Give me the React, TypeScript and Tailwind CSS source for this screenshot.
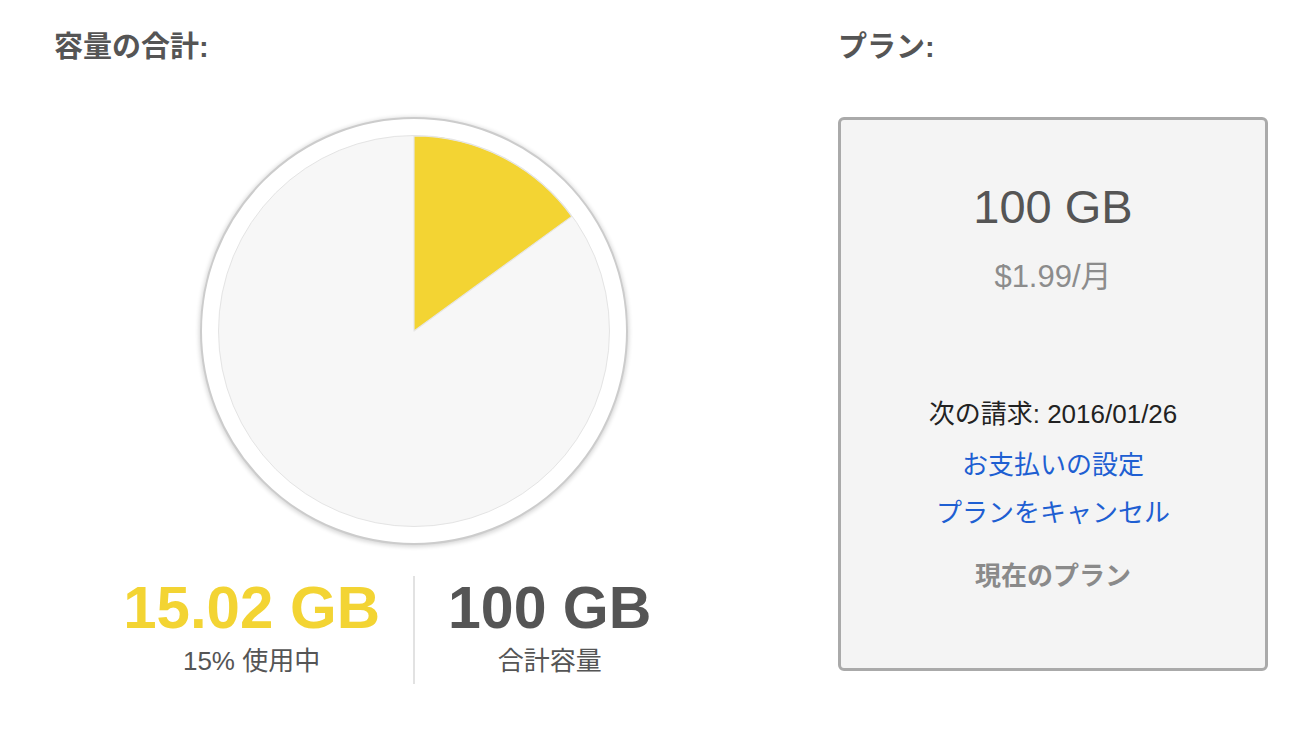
import React from "react";

const FONT = { fontFamily: '"Liberation Sans", "Noto Sans CJK JP", sans-serif' };

function Pie() {
  const c = 197;
  const r = 196;
  const a = (54 * Math.PI) / 180;
  const x = c + (r - 1) * Math.sin(a);
  const y = c - (r - 1) * Math.cos(a);
  return (
    <svg width="394" height="394" viewBox="0 0 394 394">
      <circle cx={c} cy={c} r={r - 0.5} fill="#f7f7f7" stroke="#e4e4e4" strokeWidth="1" />
      <path
        d={`M${c},${c} L${c},${c - r + 1} A${r - 1},${r - 1} 0 0 1 ${x},${y} Z`}
        fill="#f3d433"
        stroke="#e6e6e6"
        strokeWidth="1.2"
        strokeLinejoin="round"
      />
    </svg>
  );
}

export default function App() {
  return (
    <div className="w-[1300px] h-[754px] bg-white flex" style={FONT}>
      <div className="w-[828px] pt-[31px] flex flex-col">
        <div className="px-[54px] text-[29px] leading-[32px] font-bold text-[#555555]">容量の合計:</div>
        <div className="mt-[54px] flex justify-center">
          <div className="w-[428px] h-[428px] rounded-full bg-white border-2 border-[#cccccc] shadow-[0_1px_4px_1px_rgba(0,0,0,0.16)] flex items-center justify-center">
            <Pie />
          </div>
        </div>
        <div className="mt-[31px] grid grid-cols-[1fr_2px_1fr]">
          <div className="flex justify-end">
            <div className="pr-[33px] pt-[2px] flex flex-col items-center">
              <div className="text-[60px] leading-[60px] font-bold text-[#f3d433]">15.02 GB</div>
              <div className="mt-[9px] text-[26px] leading-[28px] text-[#555555]">15% 使用中</div>
            </div>
          </div>
          <div className="w-[2px] h-[108px] bg-[#e2e2e2]" />
          <div className="flex justify-start">
            <div className="pl-[33px] pt-[2px] flex flex-col items-center">
              <div className="text-[59px] leading-[60px] font-bold text-[#555555]">100 GB</div>
              <div className="mt-[9px] text-[26px] leading-[28px] text-[#555555]">合計容量</div>
            </div>
          </div>
        </div>
      </div>
      <div className="ml-[10px] w-[430px] pt-[31px] flex flex-col">
        <div className="text-[29px] leading-[32px] font-bold text-[#555555]">プラン:</div>
        <div className="mt-[54px] h-[554px] rounded-[6px] border-[3px] border-[#aaaaaa] bg-[#f4f4f4] flex flex-col items-center">
          <div className="mt-[64px] text-[47px] leading-[46px] text-[#555555]">100 GB</div>
          <div className="mt-[31px] text-[31px] leading-[31px] text-[#8c8c8c]">$1.99/月</div>
          <div className="mt-[107px] text-[26px] leading-[30px] text-[#222222]">次の請求: 2016/01/26</div>
          <div className="mt-[21px] text-[26px] leading-[30px] text-[#1e5fd2]">お支払いの設定</div>
          <div className="mt-[18px] text-[26px] leading-[30px] text-[#1e5fd2]">プランをキャンセル</div>
          <div className="mt-[33px] text-[26px] leading-[30px] font-bold text-[#8a8a8a]">現在のプラン</div>
        </div>
      </div>
    </div>
  );
}
